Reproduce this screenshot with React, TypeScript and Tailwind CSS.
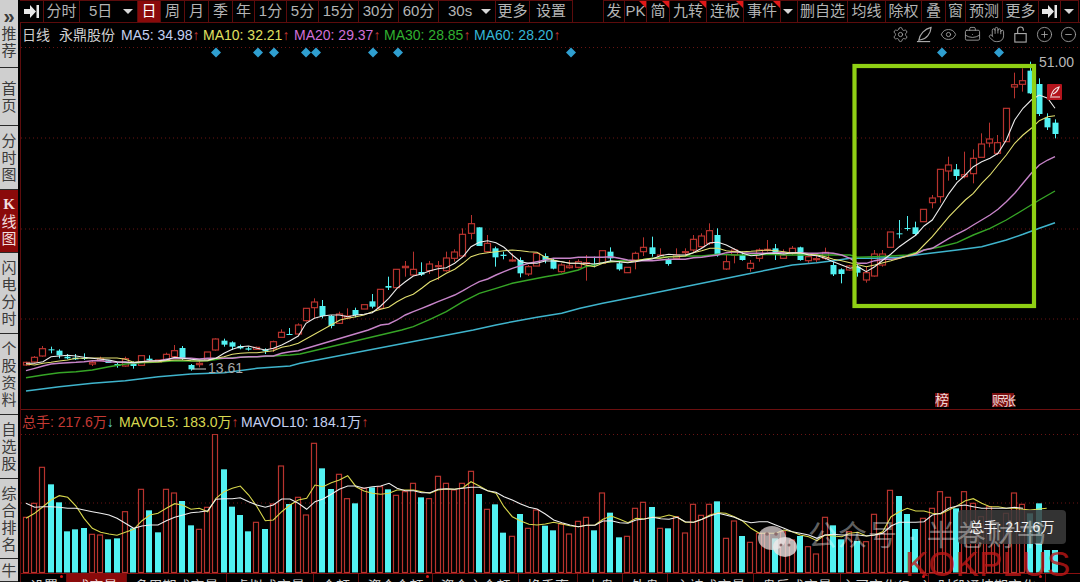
import React from "react";
import { Settings, Eye, BriefcaseBusiness, Hand, CirclePlus, CircleMinus } from "lucide-react";

type C = [string, number, number, number, number];
// [colour, body top, body bottom, wick top, wick bottom], read as crop coordinates
const A: C[] = [["r",397,405,395,408],["r",382,396,378,400],["r",356,378,348,380],["c",358,361,350,370],["c",362,376,358,385],["c",380,385,372,388],["c",383,388,372,390],["c",384,387,370,390],["r",397,402,392,408],["r",386,392,380,394],["c",391,399,391,399],["c",402,408,398,413],["r",386,408,380,410],["c",397,408,394,416],["r",377,406,377,406],["c",386,390,376,392],["r",390,397,390,397],["r",373,392,368,392],["r",362,380,345,384],["c",354,386,348,390],["c",405,418,402,422],["r",400,404,392,412],["r",366,390,366,390],["r",327,360,325,362],["c",332,344,326,350],["c",337,350,334,360],["c",348,355,344,358],["c",355,359,350,362],["r",352,358,350,360],["c",359,363,355,372],["r",335,356,332,366],["r",307,322,298,322],["c",312,314,294,315],["r",285,312,280,316]];
const B: C[] = [["r",325,362,325,365],["r",306,323,295,355],["c",318,348,300,355],["c",348,378,345,385],["r",342,370,335,372],["r",348,354,325,358],["c",330,345,323,352],["r",314,327,314,327],["c",304,320,282,325],["r",268,325,268,325],["c",258,263,230,270],["r",208,263,208,263],["r",199,203,183,230],["r",208,225,155,228],["c",216,224,187,228],["r",192,212,183,222],["r",197,200,183,240],["r",174,212,155,215],["r",156,175,148,185],["r",103,168,85,172],["r",71,100,45,118],["c",82,138,82,138],["r",130,155,105,158],["c",145,172,140,200],["c",164,168,155,178],["r",180,182,160,185],["c",180,220,172,232],["r",200,222,195,228],["r",160,198,160,198],["c",168,180,160,190],["c",180,206,175,208],["r",195,215,190,218],["r",198,203,180,206],["r",185,202,178,205],["r",188,190,165,242]];
const D: C[] = [["c",163,165,140,172],["r",122,160,122,160],["c",125,145,112,155],["c",160,178,155,182],["r",172,188,172,188],["r",130,150,125,178],["r",112,125,82,138],["c",112,132,80,140],["r",135,142,115,145],["c",148,162,145,167],["r",135,145,115,150],["r",125,127,115,140],["r",88,120,75,128],["r",78,110,70,115],["r",62,100,40,105],["c",75,135,55,140],["r",155,177,135,180],["r",120,135,115,160],["c",135,150,125,152],["r",160,175,150,185],["r",120,145,115,155],["r",118,120,90,125],["c",115,135,102,150],["r",135,145,118,147],["r",115,130,108,135],["c",112,150,110,152],["r",140,152,137,162],["r",146,148,138,158],["r",127,145,113,150],["c",165,193,155,198],["c",178,192,175,220],["r",168,180,165,182]];
const E: C[] = [["c",650,668,645,680],["r",668,690,650,698],["r",612,678,600,680],["r",612,645,600,650],["r",546,592,546,592],["c",550,552,510,565],["c",534,535,498,542],["c",532,552,515,556],["r",478,515,478,515],["r",444,458,435,475],["r",358,440,358,458],["r",345,363,320,392],["c",358,378,342,390],["r",374,380,305,385],["r",325,371,298,400],["r",282,322,250,322],["r",267,279,218,292],["r",278,310,255,315],["r",175,275,175,275],["r",104,111,68,145],["r",92,103,55,125],["c",62,130,35,132],["c",102,192,85,198],["c",204,232,190,240],["c",218,252,208,265]];
const X = (i: number) => 26 + 8.232 * i;
const scaled = (g: C[], off: number) => g.map(([k, a, b, c, d]) => [k, off + a / 3, off + b / 3, off + c / 3, off + d / 3] as C);
const candles: C[] = [...scaled(A, 230), ...scaled(B, 200), ...scaled(D, 210), ...scaled(E, 50)];

type P = [number, number];
const map = (xo: number, yo: number, ps: P[]) => ps.map(([x, y]) => `${(xo + x / 3).toFixed(1)},${(yo + y / 3).toFixed(1)}`).join(" ");
const line = (a: P[], b: P[], c: P[], d: P[]) => [map(0, 230, a), map(300, 200, b), map(580, 210, c), map(840, 50, d)].join(" ");

const maWhite = line(
  [[78,400],[104,400],[129,395],[153,380],[178,378],[203,376],[228,378],[252,382],[277,385],[302,388],[327,390],[351,395],[376,396],[401,398],[426,395],[450,392],[475,392],[499,390],[524,382],[549,385],[573,388],[598,390],[623,390],[648,385],[672,370],[697,358],[721,350],[746,348],[771,355],[796,360],[820,355],[845,345],[870,332],[895,318]],
  [[18,370],[43,355],[68,348],[93,345],[118,345],[143,350],[168,345],[192,343],[217,338],[242,318],[266,295],[291,265],[316,245],[340,228],[365,222],[390,212],[414,206],[439,203],[464,190],[489,170],[513,140],[538,127],[563,122],[588,128],[612,142],[637,165],[662,185],[686,190],[711,190],[736,183],[760,183],[785,185],[810,190],[835,190]],
  [[17,160],[43,162],[68,158],[93,152],[118,155],[143,158],[167,155],[192,150],[217,147],[241,137],[266,133],[291,135],[316,135],[340,128],[365,115],[390,98],[414,97],[439,105],[464,118],[488,130],[513,137],[538,135],[562,130],[587,130],[612,132],[637,128],[662,128],[686,135],[711,137],[736,145],[760,155],[785,165],[810,175]],
  [[54,650],[79,665],[104,650],[129,630],[153,612],[178,590],[203,572],[228,555],[252,528],[277,510],[302,470],[327,430],[351,398],[376,375],[400,350],[425,335],[450,325],[474,310],[499,270],[524,210],[549,175],[574,150],[598,135],[623,145],[645,175]]
);
const maYellow = line(
  [[78,402],[104,405],[129,400],[153,397],[178,393],[203,390],[228,385],[252,385],[277,384],[302,384],[327,384],[351,384],[376,388],[401,397],[426,395],[450,396],[475,395],[499,392],[524,390],[549,390],[573,392],[598,393],[623,392],[648,385],[672,380],[697,373],[721,370],[746,368],[771,368],[796,365],[820,362],[845,352],[870,347],[895,340]],
  [[120,360],[143,355],[168,350],[192,345],[217,335],[242,328],[266,322],[291,305],[316,292],[340,283],[365,265],[390,245],[414,235],[439,220],[464,208],[489,190],[513,170],[538,162],[563,158],[588,155],[612,152],[637,150],[662,152],[686,155],[711,157],[736,172],[760,180],[785,185],[810,190],[835,190]],
  [[17,165],[43,170],[68,160],[93,155],[118,155],[143,157],[167,152],[192,148],[217,145],[241,145],[266,140],[291,140],[316,138],[340,128],[365,122],[390,115],[414,115],[439,122],[464,125],[488,125],[513,124],[538,122],[562,120],[587,122],[612,125],[637,130],[662,130],[686,133],[711,135],[736,140],[760,148],[785,152],[810,158]],
  [[79,650],[104,645],[129,638],[153,632],[178,625],[203,618],[228,610],[252,585],[277,560],[302,530],[327,500],[351,475],[376,450],[400,430],[425,400],[450,375],[474,345],[499,315],[524,280],[549,255],[574,235],[598,212],[623,200],[645,197]]
);
const maPurple = line(
  [[78,422],[104,415],[129,408],[153,402],[178,400],[203,398],[228,397],[252,395],[277,392],[302,392],[327,395],[351,397],[376,397],[401,398],[426,395],[450,394],[475,393],[499,388],[524,385],[549,385],[573,385],[598,387],[623,385],[648,385],[672,385],[697,385],[721,382],[746,380],[771,380],[796,378],[820,378],[845,370],[870,365],[895,362]],
  [[205,390],[242,375],[266,372],[291,360],[316,345],[340,335],[365,325],[390,315],[414,305],[439,295],[464,285],[489,272],[513,258],[538,245],[563,237],[588,225],[612,215],[637,205],[662,197],[686,190],[711,185],[736,180],[760,175],[785,175],[810,175],[835,172]],
  [[17,142],[43,142],[68,142],[93,140],[118,145],[143,150],[167,152],[192,152],[217,152],[241,150],[266,148],[291,148],[316,148],[340,143],[365,142],[390,138],[414,135],[439,128],[464,125],[488,128],[513,130],[538,130],[562,130],[587,128],[612,128],[637,130],[662,128],[686,130],[711,130],[736,128],[760,130],[785,135],[810,145]],
  [[54,640],[79,640],[104,632],[129,628],[153,628],[178,625],[203,617],[228,612],[252,600],[277,595],[302,580],[327,565],[351,552],[376,540],[400,525],[425,510],[450,495],[474,478],[499,455],[524,430],[549,400],[574,370],[598,345],[623,330],[645,320]]
);
const maGreen = line(
  [[78,443],[129,435],[178,428],[228,425],[277,420],[327,410],[376,402],[426,398],[475,396],[524,392],[573,393],[623,392],[672,385],[721,382],[771,380],[820,378],[870,375],[900,372]],
  [[305,390],[340,380],[390,358],[439,335],[489,305],[538,280],[588,265],[637,250],[686,240],[736,230],[785,222],[835,210]],
  [[17,170],[68,158],[118,152],[167,152],[217,145],[266,140],[316,138],[365,138],[414,133],[464,135],[513,135],[562,133],[612,135],[662,135],[711,135],[760,135],[810,135]],
  [[54,622],[104,620],[153,618],[203,615],[252,600],[302,590],[351,578],[400,555],[450,535],[499,510],[549,480],[598,450],[645,423]]
);
const maCyan = line(
  [[78,483],[178,470],[277,460],[376,452],[475,440],[573,432],[672,428],[771,415],[870,408],[900,400]],
  [[520,390],[588,375],[637,365],[711,352],[785,340]],
  [[0,295],[68,280],[118,270],[192,255],[266,240],[340,225],[414,210],[488,195],[562,180],[637,165],[711,158],[760,152],[810,145]],
  [[54,625],[104,625],[178,622],[252,612],[351,600],[425,590],[499,570],[549,553],[598,535],[645,518]]
);

// volume bars: colour and top of bar, in crop coordinates
const vol: [string, number][] = ([
  "r352","r310","r202","c253","c307","c394","c388","c384","r403","r405","c418","c415","r335","c385","r268","c331","c397","r268","r279","c303","c376","r388","r322","r103","c208","c320","c345","c394","r367","c387","r312","r198","c312","r292","r345","r130","c205","c267","r223","r296","c310",
  "r265","c262","r260","c268","r286","r275","r250","c292","r296","r229","r250","r270","r250","r214","c282","r328","c313","c398","r409","c342","r385","r330","c377","c391","r372","r402","r364","r352","c391","r279","c338","c412","r409","r325","r307","c321","r385","c385","r350","r399","r313","r346","r313","c304",
  "r415","r363","c408","r427","r400","r400","c415","r395","r420","c408","r440","r462","r352","c376","c418","r395","c423","r425","r343","r400","r271","c288","c342","c387","r355","r325","r275","r292","c325","r275","r310","r350","r320","r395","r340","r279","r313","c340","c310","c450","c450",
] as string[]).map((s) => [s[0], 400 + Number(s.slice(1)) / 3] as [string, number]);

const vline = (a: P[], b: P[], c: P[]) => [map(0, 400, a), map(360, 400, b), map(720, 400, c)].join(" ");
const volYellow = vline(
  [[78,355],[104,340],[129,320],[153,300],[178,287],[203,292],[228,318],[252,355],[277,385],[302,397],[327,402],[351,406],[376,397],[401,388],[426,362],[450,345],[474,340],[499,325],[524,311],[549,316],[573,328],[598,325],[623,335],[648,295],[672,275],[697,265],[721,258],[746,285],[771,320],[796,362],[820,360],[845,335],[870,315],[895,300],[920,295],[945,255],[969,260],[994,248],[1018,240],[1043,227],[1068,260]],
  [[12,273],[37,280],[62,283],[87,280],[111,270],[136,270],[161,270],[185,275],[210,280],[234,270],[259,267],[284,268],[309,263],[333,245],[358,258],[383,272],[408,280],[432,320],[457,350],[482,363],[507,373],[531,375],[556,372],[581,367],[606,372],[630,377],[655,380],[680,376],[705,375],[729,358],[754,348],[779,358],[804,368],[828,355],[853,357],[878,352],[902,352],[927,345],[952,352],[976,367],[1001,367],[1026,358],[1050,345],[1075,338]],
  [[17,340],[43,350],[68,363],[93,385],[118,400],[143,400],[167,400],[192,390],[217,395],[241,405],[266,410],[291,422],[315,405],[340,408],[365,410],[389,400],[414,397],[439,408],[464,405],[488,395],[513,350],[538,335],[562,325],[587,333],[612,333],[637,340],[662,342],[686,330],[711,318],[736,302],[760,296],[785,310],[810,320],[835,320],[859,325],[884,325],[930,330],[980,325]]
);
const volWhite = vline(
  [[78,310],[104,322],[129,320],[153,320],[178,322],[203,325],[228,325],[252,330],[277,335],[302,340],[327,345],[351,355],[376,370],[401,385],[426,378],[450,375],[474,375],[499,362],[524,352],[549,345],[573,338],[598,336],[623,332],[648,298],[672,296],[697,296],[721,293],[746,305],[771,315],[796,322],[820,315],[845,297],[870,297],[895,310],[920,328],[945,305],[969,297],[994,283],[1018,268],[1043,258],[1068,258]],
  [[12,265],[37,260],[62,258],[87,250],[111,265],[136,272],[161,272],[185,278],[210,278],[234,268],[259,266],[284,268],[309,265],[333,262],[358,262],[383,272],[408,277],[432,290],[457,300],[482,312],[507,322],[531,327],[556,342],[581,360],[606,368],[630,375],[655,380],[680,376],[705,376],[729,363],[754,362],[779,368],[804,370],[828,360],[853,357],[878,352],[902,356],[927,358],[952,352],[976,365],[1001,367],[1026,358],[1050,348],[1075,340]],
  [[17,345],[43,352],[68,362],[93,368],[118,365],[143,365],[167,375],[192,385],[217,395],[241,400],[266,405],[291,415],[315,405],[340,403],[365,405],[389,405],[414,405],[439,408],[464,405],[488,400],[513,378],[538,367],[562,367],[587,367],[612,365],[637,345],[662,340],[686,325],[711,318],[736,315],[760,320],[785,325],[810,325],[835,325],[859,325],[884,322],[909,325]]
);

const RED = "#b8332e";
const CYAN = "#52f2f2";
const diamonds = [216, 258, 274, 306, 316, 373, 398, 571, 942, 999];

const sideItems: { h: string; text: string[]; active?: boolean }[] = [
  { h: "h-[68px]", text: ["»", "推", "荐"] },
  { h: "h-[58px]", text: ["首", "页"] },
  { h: "h-[64px]", text: ["分", "时", "图"] },
  { h: "h-[63px]", text: ["K", "线", "图"], active: true },
  { h: "h-[81px]", text: ["闪", "电", "分", "时"] },
  { h: "h-[81px]", text: ["个", "股", "资", "料"] },
  { h: "h-[64px]", text: ["自", "选", "股"] },
  { h: "h-[80px]", text: ["综", "合", "排", "名"] },
  { h: "h-[23px]", text: ["牛"] },
];

const Arrow = () => (
  <svg width="15" height="13" viewBox="0 0 15 13">
    <path d="M0 4h6V0l6 6.5L6 13V9H0z" fill="#e8e8e8" />
    <rect x="12.5" y="0" width="2.5" height="13" fill="#e8e8e8" />
  </svg>
);
const Caret = () => <span className="ml-auto mr-1 h-0 w-0 border-x-[5px] border-t-[5px] border-x-transparent border-t-[#d8d8d8]" />;

const Cell = ({ w, children, active, flag, caret }: { w: string; children?: React.ReactNode; active?: boolean; flag?: boolean; caret?: boolean }) => (
  <div className={`relative flex h-full items-center justify-center whitespace-nowrap border-r border-t border-[#5c0c0c] ${w} ${active ? "bg-[#8a0a0a] text-white" : "text-[#b4b4b4]"}`}>
    {children}
    {caret && <Caret />}
    {flag && <span className="absolute right-0 top-0 h-0 w-0 border-l-[7px] border-t-[7px] border-l-transparent border-t-[#e01818]" />}
  </div>
);

const tabs: { w: string; t: string; dot?: boolean; active?: boolean }[] = [
  { w: "w-[45px]", t: "设置", dot: true },
  { w: "w-[60px]", t: "成交量", active: true },
  { w: "w-[100px]", t: "多周期成交量" },
  { w: "w-[87px]", t: "虚拟成交量" },
  { w: "w-[45px]", t: "金额" },
  { w: "w-[74px]", t: "资金金额", dot: true },
  { w: "w-[86px]", t: "资金主金额" },
  { w: "w-[59px]", t: "换手率" },
  { w: "w-[45px]", t: "内盘" },
  { w: "w-[45px]", t: "外盘" },
  { w: "w-[86px]", t: "主被成交量" },
  { w: "w-[87px]", t: "盘后成交量" },
  { w: "w-[88px]", t: "主买变化(Pro)", dot: true },
  { w: "w-[117px]", t: "时段通技期变化", dot: true },
];

export default function App() {
  return (
    <div className="flex h-[582px] w-[1080px] overflow-hidden bg-black [font-family:'Liberation_Sans','Noto_Sans_CJK_SC',sans-serif]">
      <aside className="w-[18px] shrink-0 bg-[#cfcfcf]">
        {sideItems.map((s, i) => (
          <div key={i} className={`flex ${s.h} flex-col items-center justify-center border-b border-[#2a2a2a] text-[15px] leading-[17px] ${s.active ? "bg-[#8a0a0a] text-[#f2dede]" : "text-[#3a3a3a]"}`}>
            {s.text.map((c, j) => (
              <span key={j} className={c === "K" ? "font-bold [font-family:'Liberation_Serif',serif]" : c === "»" ? "text-[20px] font-bold" : ""}>{c}</span>
            ))}
          </div>
        ))}
      </aside>
      <div className="w-[2px] shrink-0 bg-black" />
      <main className="flex min-w-0 flex-1 flex-col">
        {/* top toolbar */}
        <div className="flex h-[23px] shrink-0 items-center border-b border-[#5c0c0c] text-[15px]">
          <Cell w="w-[24px]"><Arrow /></Cell>
          <Cell w="w-[36px]">分时</Cell>
          <Cell w="w-[58px]"><span className="ml-[9px]">5日</span><Caret /></Cell>
          <Cell w="w-[23px]" active>日</Cell>
          <Cell w="w-[24px]">周</Cell>
          <Cell w="w-[24px]">月</Cell>
          <Cell w="w-[24px]">季</Cell>
          <Cell w="w-[22px]">年</Cell>
          <Cell w="w-[32px]">1分</Cell>
          <Cell w="w-[32px]">5分</Cell>
          <Cell w="w-[40px]">15分</Cell>
          <Cell w="w-[40px]">30分</Cell>
          <Cell w="w-[40px]">60分</Cell>
          <Cell w="w-[57px]"><span className="ml-[9px]">30s</span><Caret /></Cell>
          <Cell w="w-[34px]">更多</Cell>
          <Cell w="w-[43px]">设置</Cell>
          <div className="h-full w-[31px] border-r border-[#5c0c0c]" />
          <Cell w="w-[21px]">发</Cell>
          <Cell w="w-[22px]" flag>PK</Cell>
          <Cell w="w-[23px]" flag>简</Cell>
          <Cell w="w-[37px]" flag>九转</Cell>
          <Cell w="w-[37px]" flag>连板</Cell>
          <Cell w="w-[37px]" flag>事件</Cell>
          <Cell w="w-[17px]"><Caret /></Cell>
          <Cell w="w-[50px]">删自选</Cell>
          <Cell w="w-[38px]">均线</Cell>
          <Cell w="w-[36px]">除权</Cell>
          <Cell w="w-[24px]">叠</Cell>
          <Cell w="w-[20px]">窗</Cell>
          <Cell w="w-[37px]">预测</Cell>
          <Cell w="w-[36px]">更多</Cell>
          <Cell w="w-[22px]"><Arrow /></Cell>
          <Cell w="w-[18px]"><Caret /></Cell>
        </div>

        {/* chart area */}
        <div className="relative flex flex-1 flex-col overflow-hidden border-l border-[#5c0c0c]">
          <div className="flex h-[23px] shrink-0 items-center whitespace-nowrap text-[14px] leading-none text-[#cfcfcf]">
            <span className="ml-[1px] w-[37px]">日线</span>
            <span className="w-[62px]">永鼎股份</span>
            <span className="w-[82px] text-[#c4d0f0]">MA5: 34.98<span className="text-[#c43a34]">↑</span></span>
            <span className="w-[91px] text-[#e0e060]">MA10: 32.21<span className="text-[#c43a34]">↑</span></span>
            <span className="w-[90px] text-[#d070d8]">MA20: 29.37<span className="text-[#c43a34]">↑</span></span>
            <span className="w-[90px] text-[#30b030]">MA30: 28.85<span className="text-[#c43a34]">↑</span></span>
            <span className="w-[90px] text-[#35b5d5]">MA60: 28.20<span className="text-[#c43a34]">↑</span></span>
            <div className="ml-auto mr-[3px] flex items-center gap-[7px] text-[#a8a8a8]">
              <Settings size={17} strokeWidth={1.2} />
              <svg width="17" height="17" viewBox="0 0 18 18" fill="none" stroke="currentColor" strokeWidth="1.2">
                <path d="M1 16.5h14" />
                <path d="M3 15C4 9 9 3 16 1.5 15.500 8 11 14 5 14.500z" />
              </svg>
              <Eye size={17} strokeWidth={1.2} />
              <BriefcaseBusiness size={17} strokeWidth={1.2} />
              <Hand size={17} strokeWidth={1.2} />
              <svg width="17" height="17" viewBox="0 0 18 18" fill="none" stroke="currentColor" strokeWidth="1.2">
                <rect x="3" y="8" width="12" height="9" />
                <path d="M6 8V4a3 3 0 0 1 6 0v1" />
              </svg>
              <CirclePlus size={17} strokeWidth={1.2} />
              <CircleMinus size={17} strokeWidth={1.2} />
            </div>
          </div>

          <svg width="1059" height="363" viewBox="21 46 1059 363" className="block shrink-0">
            {[47.5, 138, 229, 319].map((y) => (
              <line key={y} x1="21" x2="1080" y1={y} y2={y} stroke="#6a1414" strokeDasharray="1 3" />
            ))}
            {diamonds.map((x) => (
              <path key={x} d={`M${x} 47.5l5 5-5 5-5-5z`} fill="#2f9fd0" />
            ))}
            {candles.map(([k, t, b, wt, wb], i) => {
              const x = Math.round(X(i));
              const col = k === "r" ? RED : CYAN;
              return (
                <g key={i}>
                  <line x1={x + 0.5} x2={x + 0.5} y1={wt} y2={wb} stroke={col} />
                  <rect x={x - 2.5} y={t} width={6} height={Math.max(b - t, 1)} fill={k === "r" ? "#000" : CYAN} stroke={k === "r" ? col : "none"} strokeWidth={k === "r" ? 1.2 : 0} />
                </g>
              );
            })}
            <polyline points={maCyan} fill="none" stroke="#3fb4cc" strokeWidth="1.5" />
            <polyline points={maGreen} fill="none" stroke="#36a526" strokeWidth="1.4" />
            <polyline points={maPurple} fill="none" stroke="#c784c9" strokeWidth="1.4" />
            <polyline points={maYellow} fill="none" stroke="#e3e070" strokeWidth="1.1" />
            <polyline points={maWhite} fill="none" stroke="#ececec" strokeWidth="1.1" />

            <line x1="192" x2="206" y1="369" y2="369" stroke="#cfcfcf" />
            <text x="208" y="373" fontSize="14" fill="#a8a8a8">13.61</text>
            <text x="1039" y="67" fontSize="14" fill="#b8b8b8">51.00</text>

            <rect x="1047" y="84" width="15" height="16" rx="1" fill="#b3141c" />
            <path d="M1051 96c1-4 4-8 8-9-1 3-3 6-6 7m-3 3h10" fill="none" stroke="#f3e8e8" strokeWidth="1.2" />

            <rect x="854.5" y="66" width="179.5" height="240" fill="none" stroke="#8fd014" strokeWidth="4.2" />

            <rect x="935" y="393" width="14" height="14" fill="#7a1010" />
            <text x="935" y="405" fontSize="14" fill="#f0d8d8">榜</text>
            <rect x="992" y="393" width="22" height="14" fill="#7a1010" />
            <text x="992" y="405" fontSize="13" fill="#f0d8d8" letterSpacing="-2">赆张</text>
          </svg>

          <div className="h-[1px] shrink-0 bg-[#6b0f0f]" />
          <div className="flex h-[24px] shrink-0 items-center whitespace-nowrap text-[14px] leading-none">
            <span className="ml-[1px] w-[97px] text-[#c43a34]">总手: 217.6万<span className="text-[#5ccfd0]">↓</span></span>
            <span className="w-[122px] text-[#d8d850]">MAVOL5: 183.0万<span className="text-[#c43a34]">↑</span></span>
            <span className="text-[#c4d0f0]">MAVOL10: 184.1万<span className="text-[#c43a34]">↑</span></span>
          </div>

          <svg width="1059" height="139" viewBox="21 434 1059 139" className="block shrink-0">
            {[434.5, 503].map((y) => (
              <line key={y} x1="21" x2="1080" y1={y} y2={y} stroke="#6a1414" strokeDasharray="1 3" />
            ))}
            {vol.map(([k, top], i) => {
              const x = Math.round(X(i));
              return k === "c" ? (
                <rect key={i} x={x - 3} y={top} width={6} height={572.5 - top} fill={CYAN} />
              ) : (
                <rect key={i} x={x - 2.5} y={top} width={5} height={572.5 - top} fill="#000" stroke={RED} strokeWidth="1.2" />
              );
            })}
            <polyline points={volYellow} fill="none" stroke="#d9d84c" strokeWidth="1.1" />
            <polyline points={volWhite} fill="none" stroke="#eeeeee" strokeWidth="1.1" />
          </svg>

          {/* bottom tabs, cut by the window edge */}
          <div className="flex h-[9px] shrink-0 overflow-hidden border-t border-[#8a1010] pl-[1px] text-[14px] leading-[20px] text-[#cfcfcf]">
            {tabs.map((t, i) => (
              <div key={i} className={`relative flex ${t.w} shrink-0 justify-center whitespace-nowrap border-r border-[#6b0f0f] pt-[2px] ${t.active ? "bg-[#8a0a0a] text-[#f2dede]" : ""}`}>
                {t.t}
                {t.dot && <span className="absolute right-[3px] top-[1px] h-[3px] w-[3px] rounded-full bg-[#e01818]" />}
              </div>
            ))}
          </div>

          {/* watermark and tooltip lying over the volume chart */}
          <div className="absolute left-[937px] top-[487px] flex h-[34px] w-[108px] items-center justify-center rounded-[4px] bg-[#3c3c3c]/85 text-[14px] text-[#f0f0f0]">总手: 217.6万</div>
          <svg className="absolute left-[736px] top-[502px]" width="42" height="34" viewBox="0 0 42 34">
            <ellipse cx="15" cy="13" rx="14" ry="12" fill="#e8dcdc" fillOpacity="0.72" />
            <ellipse cx="28" cy="22" rx="12" ry="10" fill="#f0e8e8" fillOpacity="0.78" />
            <circle cx="10" cy="9" r="1.8" fill="#8a6a6a" />
            <circle cx="19" cy="9" r="1.8" fill="#8a6a6a" />
            <circle cx="24" cy="20" r="1.5" fill="#8a6a6a" />
            <circle cx="32" cy="20" r="1.5" fill="#8a6a6a" />
          </svg>
          <div className="absolute left-[787px] top-[496px] whitespace-nowrap text-[29px] leading-[34px] tracking-[1px] text-white/40">公众号 · 半卷财书</div>
          <div className="absolute left-[884px] top-[521px] whitespace-nowrap text-[35px] leading-[40px] text-[#c01818]/80">KOKPLUS</div>
        </div>
      </main>
    </div>
  );
}
